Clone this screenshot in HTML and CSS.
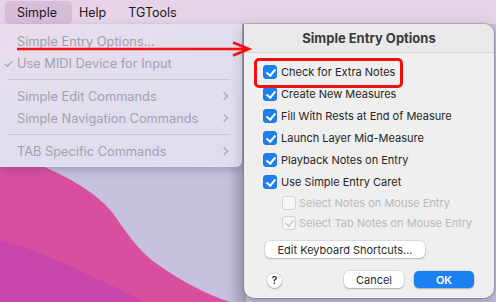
FILE: index.html
```html
<!DOCTYPE html>
<html lang="en">
<head>
    <meta charset="UTF-8">
    <title>Simple Entry Options</title>
    <link rel="stylesheet" href="styles.css">
</head>
<body>
    <!-- wallpaper -->
    <svg class="wallpaper" viewBox="0 0 496 302" width="496" height="302">
        <rect width="496" height="302" fill="#c6c1dc"/>
        <path d="M0 160 L40 165 C70 178 95 192 112 212 C125 230 138 252 160 266 C180 280 205 294 230 302 L0 302 Z" fill="#d84f9e"/>
        <path d="M0 240 C40 250 90 275 145 302 L0 302 Z" fill="#c946ab"/>
        <rect x="226" y="24" width="20" height="278" fill="url(#shade)"/>
        <defs>
            <linearGradient id="shade" x1="0" x2="1">
                <stop offset="0" stop-color="#6a6480" stop-opacity="0"/>
                <stop offset="1" stop-color="#6a6480" stop-opacity="0.35"/>
            </linearGradient>
        </defs>
    </svg>

    <div class="menubar">
        <span class="menubar-item active">Simple</span>
        <span class="menubar-item">Help</span>
        <span class="menubar-item">TGTools</span>
    </div>

    <div class="desktop">
        <div class="menu">
            <div class="menu-item">Simple Entry Options...</div>
            <div class="menu-item"><span class="tick">✓</span>Use MIDI Device for Input</div>
            <div class="menu-sep"></div>
            <div class="menu-item">Simple Edit Commands<span class="chev"></span></div>
            <div class="menu-item">Simple Navigation Commands<span class="chev"></span></div>
            <div class="menu-sep"></div>
            <div class="menu-item">TAB Specific Commands<span class="chev"></span></div>
        </div>

        <div class="dialog">
            <div class="dialog-title">Simple Entry Options</div>
            <div class="dialog-body">
                <label class="row"><span class="box on"></span>Check for Extra Notes</label>
                <label class="row"><span class="box on"></span>Create New Measures</label>
                <label class="row"><span class="box on"></span>Fill With Rests at End of Measure</label>
                <label class="row"><span class="box on"></span>Launch Layer Mid-Measure</label>
                <label class="row"><span class="box on"></span>Playback Notes on Entry</label>
                <label class="row"><span class="box on"></span>Use Simple Entry Caret</label>
                <label class="row sub"><span class="box"></span>Select Notes on Mouse Entry</label>
                <label class="row sub"><span class="box dim"></span>Select Tab Notes on Mouse Entry</label>

                <div class="btn wide">Edit Keyboard Shortcuts...</div>

                <div class="actions">
                    <span class="help">?</span>
                    <div class="btn">Cancel</div>
                    <div class="btn primary">OK</div>
                </div>
            </div>
        </div>
    </div>

    <!-- annotations drawn on top -->
    <svg class="arrow" viewBox="0 0 496 302" width="496" height="302">
        <path d="M17 49 H248" stroke="#f01010" stroke-width="2.6" fill="none"/>
        <path d="M233 42.5 L249 49 L233 55.5" stroke="#f01010" stroke-width="2.6" fill="none"/>
    </svg>
    <div class="highlight"></div>
</body>
</html>
```

FILE: styles.css
```css
body {
    margin: 0;
    width: 496px;
    height: 302px;
    overflow: hidden;
    position: relative;
    font-family: Inter, "Noto Sans", sans-serif;
    color: #262626;
}

.wallpaper {
    position: absolute;
    top: 0;
    left: 0;
    z-index: 0;
}

.menubar {
    position: relative;
    display: flex;
    align-items: center;
    height: 24px;
    padding-left: 5px;
    background: #e6d3e7;
    font-size: 12.5px;
    color: #1d1a20;
}

.menubar-item {
    display: flex;
    align-items: center;
    height: 23px;
    margin-left: 7px;
    margin-right: 15px;
}

.menubar-item.active {
    background: #d7bdd8;
    border-radius: 5px;
    padding: 0 15px 0 12px;
    margin: 0;
}

.desktop {
    position: relative;
    display: flex;
    align-items: flex-start;
    gap: 2px;
}

.menu {
    width: 242px;
    height: 143px;
    box-sizing: border-box;
    padding: 6px 0 4px;
    background: linear-gradient(160deg, #e9dcec 0%, #e1dfee 45%, #dfdcee 100%);
    border-radius: 0 0 6px 0;
    box-shadow: 0 3px 8px rgba(60, 50, 90, 0.25);
    font-size: 12.8px;
    color: #a29eb0;
}

.menu-item {
    position: relative;
    display: flex;
    align-items: center;
    height: 22px;
    padding-left: 17px;
    white-space: nowrap;
}

.tick {
    position: absolute;
    left: 3px;
    font-size: 12px;
}

.chev {
    position: absolute;
    right: 15px;
    top: 7.5px;
    width: 5px;
    height: 5px;
    border-right: 1.6px solid #a29eb0;
    border-top: 1.6px solid #a29eb0;
    transform: rotate(45deg);
}

.menu-sep {
    height: 11px;
    margin: 0 12px 0 8px;
    background: linear-gradient(#c8c5d6, #c8c5d6) center / 100% 1px no-repeat;
}

.dialog {
    width: 250px;
    height: 274px;
    background: #efefef;
    border-radius: 0 10px 10px 10px;
    box-shadow: 0 0 0 1px rgba(80, 70, 100, 0.25), 0 4px 14px rgba(40, 30, 70, 0.3);
    font-size: 11px;
    overflow: hidden;
}

.dialog-title {
    height: 28px;
    line-height: 29px;
    text-align: center;
    font-size: 13px;
    font-weight: 700;
    color: #3a3a3a;
    background: #e9e9e9;
    border-bottom: 1px solid #d4d4d4;
}

.dialog-body {
    display: flex;
    flex-direction: column;
    padding: 8px 0 0 19px;
}

.row {
    display: flex;
    align-items: center;
    gap: 4px;
    height: 22px;
    white-space: nowrap;
}

.row.sub {
    height: 20px;
    padding-left: 19px;
    gap: 3px;
    color: #b9b9b9;
}

.box {
    flex: none;
    width: 12px;
    height: 12px;
    border-radius: 3px;
    border: 1px solid #d2d2d2;
    background: #f7f7f7;
    position: relative;
}

.box.on {
    border-color: #1b79e6;
    background: #1e7ff0;
}

.box.on::after,
.box.dim::after {
    content: "";
    position: absolute;
    left: 3.5px;
    top: 0.5px;
    width: 3.5px;
    height: 7px;
    border-right: 2px solid #fff;
    border-bottom: 2px solid #fff;
    transform: rotate(40deg);
}

.box.dim::after {
    border-color: #b5b5b5;
    border-width: 1.4px;
}

.btn {
    display: flex;
    align-items: center;
    justify-content: center;
    height: 17px;
    width: 60px;
    background: #fff;
    border-radius: 5px;
    box-shadow: 0 0 0 0.5px rgba(0, 0, 0, 0.15), 0 1px 1.5px rgba(0, 0, 0, 0.2);
    font-size: 11px;
    color: #2a2a2a;
}

.btn.wide {
    width: 160px;
    margin: 8px 0 0 2px;
}

.btn.primary {
    background: #1a82f2;
    color: #fff;
    font-weight: 600;
    margin-left: 10px;
}

.actions {
    display: flex;
    align-items: center;
    margin-top: 13px;
}

.help {
    display: flex;
    align-items: center;
    justify-content: center;
    width: 15px;
    height: 15px;
    margin: 1px 62px 0 4px;
    border-radius: 50%;
    background: #fff;
    box-shadow: 0 0 0 0.5px rgba(0, 0, 0, 0.18), 0 1px 1.5px rgba(0, 0, 0, 0.2);
    font-size: 10px;
    font-weight: 600;
}

.arrow {
    position: absolute;
    top: 0;
    left: 0;
    pointer-events: none;
}

.highlight {
    position: absolute;
    left: 254px;
    top: 58px;
    width: 143px;
    height: 24px;
    border: 3px solid #ee1111;
    border-radius: 5px;
}
```
